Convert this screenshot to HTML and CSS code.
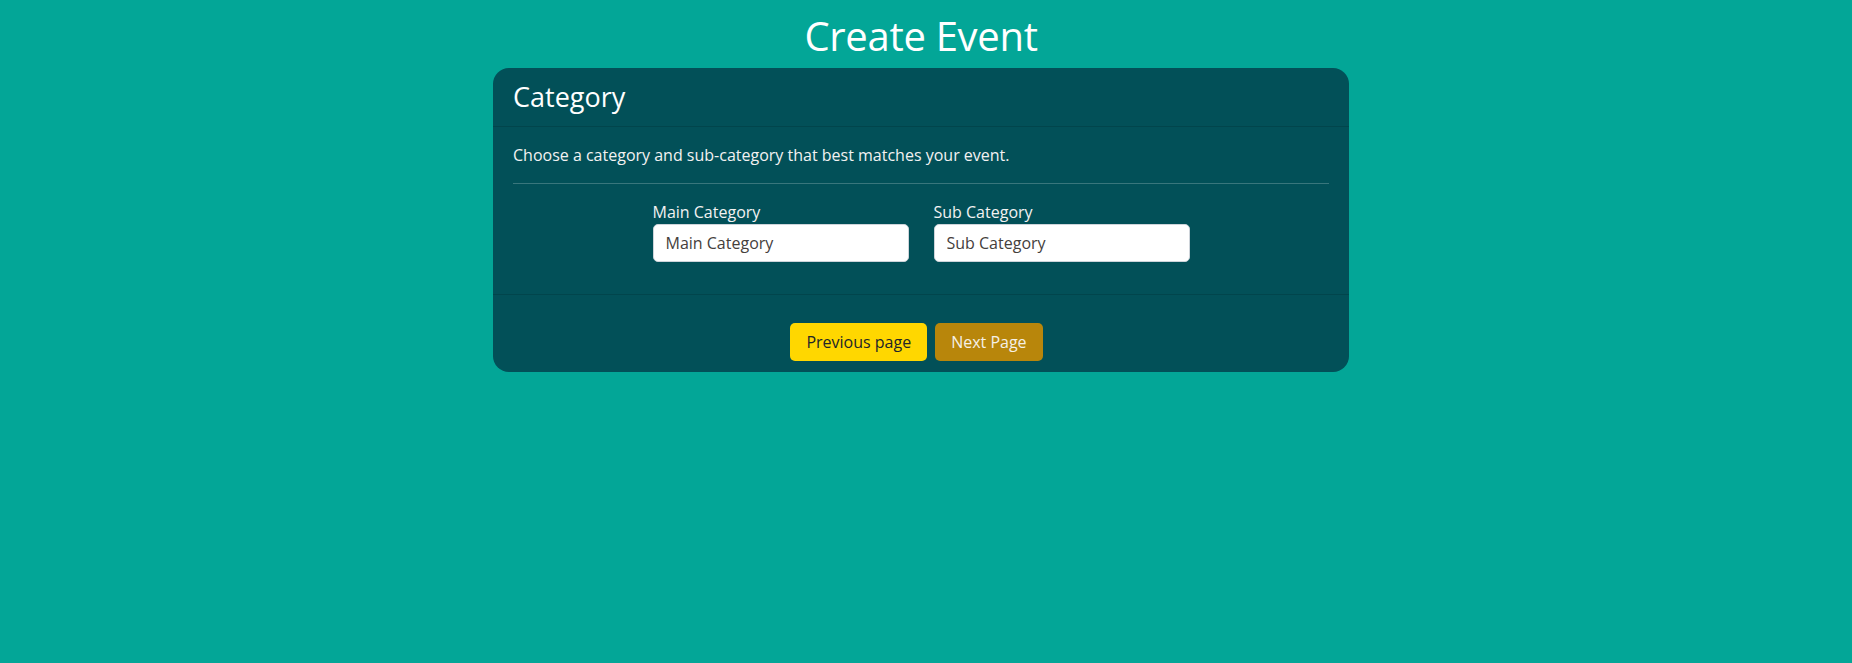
FILE: index.html
```html
<!DOCTYPE html>
<html lang="en">
<head>
<meta charset="utf-8">
<title>Create Event</title>
<link rel="stylesheet" href="styles.css">
</head>
<body>
<main class="page">
  <h1 class="page-title">Create Event</h1>
  <section class="card">
    <header class="card-header">
      <h3 class="card-title">Category</h3>
    </header>
    <div class="card-body">
      <p class="intro">Choose a category and sub-category that best matches your event.</p>
      <hr class="divider">
      <div class="fields">
        <div class="field">
          <label class="field-label" for="main-cat">Main Category</label>
          <input class="field-input" id="main-cat" type="text" placeholder="Main Category">
        </div>
        <div class="field">
          <label class="field-label" for="sub-cat">Sub Category</label>
          <input class="field-input" id="sub-cat" type="text" placeholder="Sub Category">
        </div>
      </div>
    </div>
    <footer class="card-footer">
      <button class="btn btn-prev" type="button">Previous page</button>
      <button class="btn btn-next" type="button">Next Page</button>
    </footer>
  </section>
</main>
</body>
</html>
```
FILE: styles.css
```css
html, body {
  margin: 0;
  padding: 0;
}
body {
  background: #03a697;
  font-family: "Open Sans", "Noto Sans", sans-serif;
  color: #ffffff;
  min-height: 663px;
}
.page {
  padding: 12px 10px 0 0;
}
.page-title {
  margin: 0 0 8px;
  font-size: 40px;
  line-height: 48px;
  font-weight: 400;
  text-align: center;
  color: #ffffff;
  letter-spacing: -0.3px;
}
.card {
  width: 856px;
  margin: 0 auto;
  background: #025058;
  border-radius: 16px;
  overflow: hidden;
}
.card-header {
  padding: 12px 20px;
  border-bottom: 1px solid rgba(0, 0, 0, 0.13);
}
.card-title {
  margin: 0;
  font-size: 27px;
  line-height: 34px;
  font-weight: 400;
  color: #ffffff;
}
.card-body {
  padding: 16px 20px;
}
.intro {
  margin: 0;
  font-size: 16px;
  line-height: 24px;
  color: #f2f2f2;
}
.divider {
  margin: 16px 0;
  border: 0;
  border-top: 1px solid rgba(255, 255, 255, 0.22);
}
.fields {
  display: flex;
  justify-content: center;
  gap: 25px;
  margin-bottom: 16px;
}
.field {
  width: 256px;
  display: flex;
  flex-direction: column;
}
.field-label {
  font-size: 16px;
  line-height: 24px;
  color: #f2f2f2;
}
.field-input {
  box-sizing: border-box;
  height: 38px;
  width: 100%;
  padding: 6px 12px;
  border: 1px solid #ced4da;
  border-radius: 5px;
  background: #ffffff;
  font-family: inherit;
  font-size: 16px;
  color: #495057;
}
.field-input::placeholder {
  color: #45403c;
  opacity: 1;
}
.card-footer {
  display: flex;
  justify-content: center;
  gap: 8px;
  padding: 28px 29px 11px 20px;
  border-top: 1px solid rgba(0, 0, 0, 0.13);
}
.btn {
  height: 38px;
  padding: 0 16px;
  border: 0;
  border-radius: 5px;
  font-family: inherit;
  font-size: 16px;
  cursor: pointer;
}
.btn-prev {
  background: #ffd700;
  color: #212529;
}
.btn-next {
  background: #b8860b;
  color: #f5f0e6;
}
```
